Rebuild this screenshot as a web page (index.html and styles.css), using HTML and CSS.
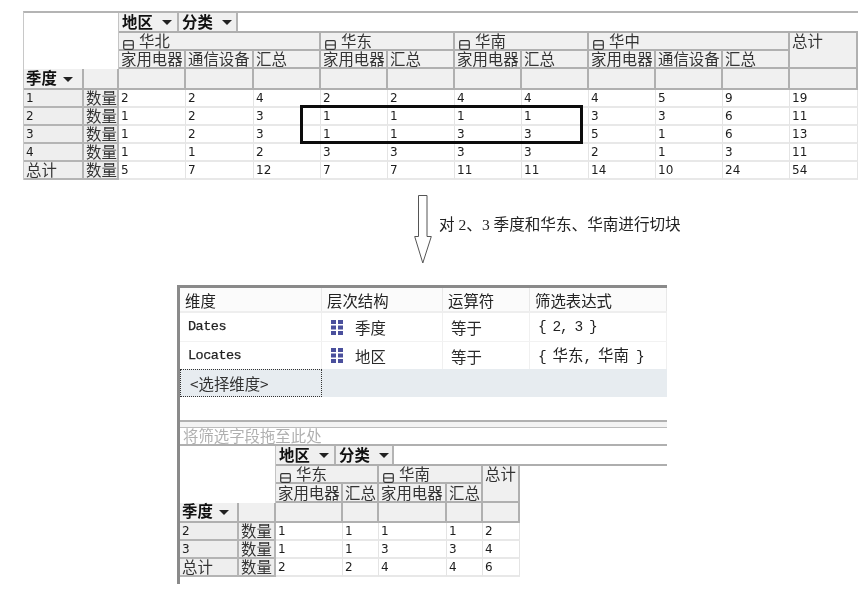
FILE: index.html
```html
<!doctype html>
<html lang="zh">
<head>
<meta charset="utf-8">
<title>切块</title>
<link rel="stylesheet" href="styles.css">
</head>
<body>
<main class="page">
  <div class="top-wrap">
    <table class="pivot top">
      <colgroup>
        <col class="c60"><col class="c35"><col class="c67"><col class="c68"><col class="c67"><col class="c67"><col class="c67"><col class="c67"><col class="c67"><col class="c67"><col class="c67"><col class="c67"><col class="c68">
      </colgroup>
      <tr class="h20">
        <td class="corner" colspan="2" rowspan="3"></td>
        <td class="filters" colspan="11"><div class="btns"><span class="btn b60">地区<i class="tri"></i></span><span class="btn b59">分类<i class="tri"></i></span></div></td>
      </tr>
      <tr class="h18">
        <td class="hd group" colspan="3"><svg class="exp" viewBox="0 0 11 10"><rect x=".7" y=".7" width="9.6" height="8.6" rx="1.2"/><path d="M.7 5h9.6"/></svg>华北</td>
        <td class="hd group" colspan="2"><svg class="exp" viewBox="0 0 11 10"><rect x=".7" y=".7" width="9.6" height="8.6" rx="1.2"/><path d="M.7 5h9.6"/></svg>华东</td>
        <td class="hd group" colspan="2"><svg class="exp" viewBox="0 0 11 10"><rect x=".7" y=".7" width="9.6" height="8.6" rx="1.2"/><path d="M.7 5h9.6"/></svg>华南</td>
        <td class="hd group" colspan="3"><svg class="exp" viewBox="0 0 11 10"><rect x=".7" y=".7" width="9.6" height="8.6" rx="1.2"/><path d="M.7 5h9.6"/></svg>华中</td>
        <td class="hd total" rowspan="2">总计</td>
      </tr>
      <tr class="h18">
        <td class="hd">家用电器</td><td class="hd">通信设备</td><td class="hd">汇总</td>
        <td class="hd">家用电器</td><td class="hd">汇总</td>
        <td class="hd">家用电器</td><td class="hd">汇总</td>
        <td class="hd">家用电器</td><td class="hd">通信设备</td><td class="hd">汇总</td>
      </tr>
      <tr class="h21">
        <td class="hd bold">季度<i class="tri"></i></td><td class="hd"></td>
        <td class="hd"></td><td class="hd"></td><td class="hd"></td><td class="hd"></td><td class="hd"></td><td class="hd"></td><td class="hd"></td><td class="hd"></td><td class="hd"></td><td class="hd"></td><td class="hd"></td>
      </tr>
      <tr class="h18"><td class="lab">1</td><td class="lab zh">数量</td><td>2</td><td>2</td><td>4</td><td>2</td><td>2</td><td>4</td><td>4</td><td>4</td><td>5</td><td>9</td><td>19</td></tr>
      <tr class="h18"><td class="lab">2</td><td class="lab zh">数量</td><td>1</td><td>2</td><td>3</td><td>1</td><td>1</td><td>1</td><td>1</td><td>3</td><td>3</td><td>6</td><td>11</td></tr>
      <tr class="h18"><td class="lab">3</td><td class="lab zh">数量</td><td>1</td><td>2</td><td>3</td><td>1</td><td>1</td><td>3</td><td>3</td><td>5</td><td>1</td><td>6</td><td>13</td></tr>
      <tr class="h18"><td class="lab">4</td><td class="lab zh">数量</td><td>1</td><td>1</td><td>2</td><td>3</td><td>3</td><td>3</td><td>3</td><td>2</td><td>1</td><td>3</td><td>11</td></tr>
      <tr class="h18"><td class="lab zh">总计</td><td class="lab zh">数量</td><td>5</td><td>7</td><td>12</td><td>7</td><td>7</td><td>11</td><td>11</td><td>14</td><td>10</td><td>24</td><td>54</td></tr>
    </table>
    <div class="highlight"></div>
  </div>

  <div class="step">
    <svg class="arrow" viewBox="0 0 18 69"><path d="M4.500.5h8.500v41h4.300L8.800 68 .7 41.500h3.800z"/></svg>
    <p class="caption">对 2、3 季度和华东、华南进行切块</p>
  </div>

  <section class="panel">
    <div class="grid head"><div>维度</div><div>层次结构</div><div>运算符</div><div>筛选表达式</div></div>
    <div class="grid row">
      <div class="mono">Dates</div>
      <div class="hier"><svg class="hi" viewBox="0 0 12 15"><path d="M0 0h5v4H0zM7 0h5v4H7zM0 5.500h5v4H0zM7 5.500h5v4H7zM0 11h5v4H0zM7 11h5v4H7z"/></svg>季度</div>
      <div>等于</div>
      <div class="mono pad">{ 2, 3 }</div>
    </div>
    <div class="grid row r27">
      <div class="mono">Locates</div>
      <div class="hier"><svg class="hi" viewBox="0 0 12 15"><path d="M0 0h5v4H0zM7 0h5v4H7zM0 5.500h5v4H0zM7 5.500h5v4H7zM0 11h5v4H0zM7 11h5v4H7z"/></svg>地区</div>
      <div>等于</div>
      <div class="mono pad"><span>{ <b class="cjk">华东</b>, <b class="cjk">华南</b> }</span></div>
    </div>
    <div class="grid pick"><div class="pick-cell">&lt;选择维度&gt;</div></div>
    <div class="blank"></div>
    <div class="splitter"></div>
    <div class="drop">将筛选字段拖至此处</div>
    <table class="pivot low">
      <colgroup>
        <col class="c59"><col class="c37"><col class="c67"><col class="c36"><col class="c68"><col class="c36"><col class="c37"><col class="c147">
      </colgroup>
      <tr class="h20">
        <td class="corner" colspan="2" rowspan="3"></td>
        <td class="filters" colspan="6"><div class="btns"><span class="btn b60">地区<i class="tri"></i></span><span class="btn b58">分类<i class="tri"></i></span></div></td>
      </tr>
      <tr class="h18">
        <td class="hd group" colspan="2"><svg class="exp" viewBox="0 0 11 10"><rect x=".7" y=".7" width="9.6" height="8.6" rx="1.2"/><path d="M.7 5h9.6"/></svg>华东</td>
        <td class="hd group" colspan="2"><svg class="exp" viewBox="0 0 11 10"><rect x=".7" y=".7" width="9.6" height="8.6" rx="1.2"/><path d="M.7 5h9.6"/></svg>华南</td>
        <td class="hd total" rowspan="2">总计</td>
      </tr>
      <tr class="h19">
        <td class="hd">家用电器</td><td class="hd">汇总</td><td class="hd">家用电器</td><td class="hd">汇总</td>
      </tr>
      <tr class="h20">
        <td class="hd bold">季度<i class="tri"></i></td><td class="hd"></td><td class="hd"></td><td class="hd"></td><td class="hd"></td><td class="hd"></td><td class="hd"></td>
      </tr>
      <tr class="h18"><td class="lab">2</td><td class="lab zh">数量</td><td>1</td><td>1</td><td>1</td><td>1</td><td>2</td></tr>
      <tr class="h18"><td class="lab">3</td><td class="lab zh">数量</td><td>1</td><td>1</td><td>3</td><td>3</td><td>4</td></tr>
      <tr class="h18"><td class="lab zh">总计</td><td class="lab zh">数量</td><td>2</td><td>2</td><td>4</td><td>4</td><td>6</td></tr>
    </table>
  </section>
</main>
</body>
</html>
```
FILE: styles.css
```css
* { box-sizing: border-box; }
html, body { margin: 0; padding: 0; background: #fff; }
body {
  font-family: "Noto Sans CJK SC", "Liberation Sans", sans-serif;
  font-size: 15.4px;
  color: #2a2a2a;
  height: 600px;
  overflow: hidden;
}
.page { filter: blur(.3px); padding-top: 11px; }

.top-wrap { position: relative; margin: 0 0 0 23px; width: 834px; }

.pivot {
  border-collapse: separate;
  border-spacing: 0;
  table-layout: fixed;
  font-family: "DejaVu Sans", sans-serif;
  font-size: 12px;
  color: #1c1c1c;
}
.pivot.top { width: 834px; border-top: 2px solid #b4b4b4; border-left: 1px solid #c8c8c8; }
.pivot.low { width: 487px; }

.c35 { width: 35px; } .c36 { width: 36px; } .c37 { width: 37px; }
.c59 { width: 59px; } .c60 { width: 60px; } .c67 { width: 67px; }
.c68 { width: 68px; } .c147 { width: 147px; }

.h18 td { height: 18px; }
.h19 td { height: 19px; }
.h20 td { height: 20px; }
.h21 td { height: 21px; }

.pivot td {
  padding: 0 0 0 2px;
  border-right: 1px solid #e4e4e4;
  border-bottom: 2px solid #e8e8e8;
  line-height: 14px;
  vertical-align: middle;
  white-space: nowrap;
}
.pivot td.corner { background: #fff; border-bottom: 0; border-right: 1px solid #c4c4c4; }
.pivot td.filters { padding: 0; border-right: 0; border-bottom: 2px solid #aeaeae; vertical-align: top; }
.btns { display: flex; height: 18px; }
.btn {
  display: flex;
  align-items: center;
  padding: 0 0 2px 3px;
  background: #f0f0f0;
  border-right: 2px solid #b4b4b4;
  font: 700 15.4px/14px "Noto Sans CJK SC", sans-serif;
  color: #111;
}
.b58 { width: 58px; } .b59 { width: 59px; } .b60 { width: 60px; }
.tri {
  display: inline-block;
  width: 0;
  height: 0;
  margin-left: 9px;
  border-left: 5px solid transparent;
  border-right: 5px solid transparent;
  border-top: 5px solid #222;
}
.btn .tri { margin-top: 2px; }
.pivot td.bold .tri { vertical-align: 2px; margin-left: 6px; }
.pivot td.hd {
  background: #f0f0f0;
  border-right: 2px solid #b0b0b0;
  border-bottom: 2px solid #b0b0b0;
  font-family: "Noto Sans CJK SC", sans-serif;
  font-size: 15.4px;
  padding-bottom: 2px;
  color: #333;
}
.pivot td.group { padding-left: 4px; }
.pivot td.total { vertical-align: top; }
.pivot td.bold { font-weight: 700; color: #111; padding-bottom: 4px; }
.pivot td.lab {
  background: #eee;
  border-right: 2px solid #b4b4b4;
  border-bottom-color: #b4b4b4;
}
.pivot td.zh {
  font-family: "Noto Sans CJK SC", sans-serif;
  font-size: 15.4px;
  color: #333;
  padding-bottom: 2px;
}

.exp {
  width: 11px;
  height: 10px;
  margin: 0 5px -3px 0;
  fill: none;
  stroke: #333;
  stroke-width: 1.2;
}
.highlight {
  position: absolute;
  left: 277px;
  top: 94px;
  width: 283px;
  height: 39px;
  border: 3px solid #0c0c0c;
}

.step { display: flex; margin: 15px 0 0 414px; height: 69px; align-items: flex-start; }
.arrow { width: 18px; height: 69px; fill: #fff; stroke: #555; stroke-width: 1; flex: none; }
.caption {
  margin: 20px 0 0 7px;
  font-size: 15.6px;
  line-height: 20px;
  font-family: "Liberation Serif", "Noto Sans CJK SC", serif;
  color: #222;
}

.panel {
  margin: 21px 0 0 177px;
  width: 490px;
  height: 299px;
  border-left: 3px solid #8a8a8a;
  border-top: 3px solid #8a8a8a;
}
.grid { display: grid; grid-template-columns: 142px 121px 87px 1fr; }
.grid > div { padding-left: 5px; display: flex; align-items: center; }
.head { height: 25px; border-bottom: 2px solid #eee; background: #fbfbfb; color: #222; line-height: 20px; }
.head > div { border-right: 1px solid #e8e8e8; }
.row { height: 29px; border-bottom: 1px solid #f2f2f2; }
.row.r27 { height: 27px; border-bottom: 0; }
.row > div { border-right: 1px solid #f0f0f0; line-height: 20px; }
.row > div + div + div { padding-left: 8px; }
.mono {
  font-family: "Liberation Mono", monospace;
  font-size: 13.5px;
  letter-spacing: -.5px;
  color: #222;
  -webkit-text-stroke: .25px #222;
}
.grid > div.mono { padding-left: 8px; }
.grid > div.pad { font-size: 14.5px; letter-spacing: -1.4px; white-space: pre; padding-left: 8px; -webkit-text-stroke: 0; }
.cjk { font: 400 15.4px/20px "Noto Sans CJK SC", sans-serif; letter-spacing: 0; }
.hier { gap: 12px; }
.grid > div.hier { padding-left: 9px; }
.hi { width: 12px; height: 15px; fill: #4a4f9c; flex: none; }
.pick { height: 28px; background: #e7ecf0; }
.grid > div.pick-cell {
  border: 1px dotted #333;
  padding-left: 9px;
  color: #333;
  height: 28px;
}
.blank { height: 23px; }
.splitter { height: 8px; border-top: 2px solid #b0b0b0; border-bottom: 1px solid #bcbcbc; background: #f3f3f3; }
.drop { height: 18px; line-height: 15px; padding-left: 3px; color: #b0b0b0; border-bottom: 2px solid #b0b0b0; }
```
